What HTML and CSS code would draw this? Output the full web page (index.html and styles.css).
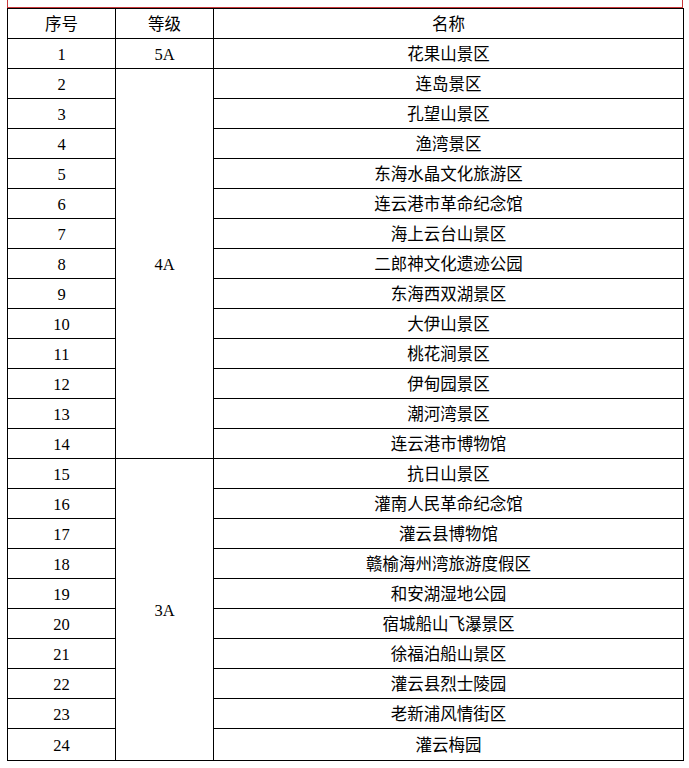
FILE: index.html
```html
<!DOCTYPE html>
<html lang="zh-CN">
<head>
<meta charset="utf-8">
<title>景区列表</title>
<link rel="stylesheet" href="styles.css">
</head>
<body>
<div class="page">
  <div class="top-frame"></div>
  <table class="spots">
    <colgroup>
      <col class="c-no">
      <col class="c-level">
      <col class="c-name">
    </colgroup>
    <thead>
      <tr><th>序号</th><th>等级</th><th>名称</th></tr>
    </thead>
    <tbody>
      <tr><td>1</td><td>5A</td><td>花果山景区</td></tr>
      <tr><td>2</td><td rowspan="13">4A</td><td>连岛景区</td></tr>
      <tr><td>3</td><td>孔望山景区</td></tr>
      <tr><td>4</td><td>渔湾景区</td></tr>
      <tr><td>5</td><td>东海水晶文化旅游区</td></tr>
      <tr><td>6</td><td>连云港市革命纪念馆</td></tr>
      <tr><td>7</td><td>海上云台山景区</td></tr>
      <tr><td>8</td><td>二郎神文化遗迹公园</td></tr>
      <tr><td>9</td><td>东海西双湖景区</td></tr>
      <tr><td>10</td><td>大伊山景区</td></tr>
      <tr><td>11</td><td>桃花涧景区</td></tr>
      <tr><td>12</td><td>伊甸园景区</td></tr>
      <tr><td>13</td><td>潮河湾景区</td></tr>
      <tr><td>14</td><td>连云港市博物馆</td></tr>
      <tr><td>15</td><td rowspan="10">3A</td><td>抗日山景区</td></tr>
      <tr><td>16</td><td>灌南人民革命纪念馆</td></tr>
      <tr><td>17</td><td>灌云县博物馆</td></tr>
      <tr><td>18</td><td>赣榆海州湾旅游度假区</td></tr>
      <tr><td>19</td><td>和安湖湿地公园</td></tr>
      <tr><td>20</td><td>宿城船山飞瀑景区</td></tr>
      <tr><td>21</td><td>徐福泊船山景区</td></tr>
      <tr><td>22</td><td>灌云县烈士陵园</td></tr>
      <tr><td>23</td><td>老新浦风情街区</td></tr>
      <tr class="last"><td>24</td><td>灌云梅园</td></tr>
    </tbody>
  </table>
</div>
</body>
</html>
```

FILE: styles.css
```css
html, body {
  margin: 0;
  padding: 0;
  background: #ffffff;
}

.page {
  padding-left: 7px;
  width: 676px;
}

.top-frame {
  box-sizing: border-box;
  height: 8px;
  width: 676px;
  border: 1px solid #c8383a;
  border-top: none;
}

.spots {
  border-collapse: collapse;
  table-layout: fixed;
  width: 676px;
  font-family: "Liberation Serif", "Noto Sans CJK SC", serif;
  font-size: 16.5px;
  color: #000000;
}

.c-no { width: 108px; }
.c-level { width: 98px; }
.c-name { width: 470px; }

.spots th,
.spots td {
  border: 1px solid #000000;
  padding: 3px 0 0;
  text-align: center;
  vertical-align: middle;
  font-weight: normal;
  line-height: 20px;
}

.spots tr {
  height: 30px;
}

.spots tr.last {
  height: 32px;
}
```
